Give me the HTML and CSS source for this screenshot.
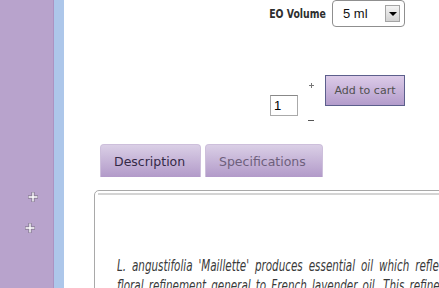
FILE: index.html
```html
<!DOCTYPE html>
<html lang="en">
<head>
    <meta charset="UTF-8">
    <title>Lavender - Maillette</title>
    <link rel="stylesheet" href="styles.css">
</head>
<body>
    <div class="page">
        <aside class="sidebar">
            <span class="plus plus-a">
                <svg width="12" height="12" viewBox="0 0 12 12"><path d="M6 1v10M1 6h10" stroke="#8a7f96" stroke-width="3.4"/><path d="M6 1.6v8.8M1.6 6h8.8" stroke="#fff" stroke-width="1.4"/></svg>
            </span>
            <span class="plus plus-b">
                <svg width="12" height="12" viewBox="0 0 12 12"><path d="M6 1v10M1 6h10" stroke="#8a7f96" stroke-width="3.4"/><path d="M6 1.6v8.8M1.6 6h8.8" stroke="#fff" stroke-width="1.4"/></svg>
            </span>
        </aside>

        <main class="main">
            <div class="options">
                <label class="opt-label">EO Volume</label>
                <div class="select">
                    <span>5 ml</span>
                    <span class="arrow"></span>
                </div>
            </div>

            <div class="buy">
                <input class="qty" type="text" value="1">
                <div class="step">
                    <span class="inc"></span>
                    <span class="dec"></span>
                </div>
                <button class="add">Add to cart</button>
            </div>

            <div class="tabs">
                <div class="tab active">Description</div>
                <div class="tab">Specifications</div>
            </div>

            <div class="panel">
                <hr>
                <p class="desc">L. angustifolia 'Maillette' produces essential oil which reflects the floral refinement general to French lavender oil. This refined oil is sweet and soft, with herbal notes.</p>
            </div>
        </main>
    </div>
</body>
</html>
```

FILE: styles.css
```css
body {
    margin: 0;
    overflow: hidden;
    background: #fff;
    font-family: "Liberation Sans", Arial, sans-serif;
}
.page {
    display: flex;
    min-height: 288px;
}
.sidebar {
    width: 53px;
    flex: none;
    background-color: #b8a3cc;
    border-right: 1px solid #ab93c2;
    box-shadow: 10px 0 0 #adc7ea;
    margin-right: 10px;
    padding-top: 191px;
    display: flex;
    flex-direction: column;
}
.plus {
    display: block;
    width: 12px;
    height: 12px;
}
.plus svg {
    display: block;
}
.plus-a {
    margin-left: 27px;
}
.plus-b {
    margin-left: 24px;
    margin-top: 19px;
}
.main {
    width: 620px;
    flex: none;
    padding-left: 30px;
}
.options {
    width: 311px;
    height: 27px;
    display: flex;
    justify-content: flex-end;
    align-items: center;
}
.opt-label {
    font-family: "DejaVu Sans Condensed", "DejaVu Sans", sans-serif;
    font-weight: bold;
    font-size: 13px;
    color: #2e2e2e;
    display: inline-block;
    transform: scaleX(0.8);
    transform-origin: right center;
    margin-right: 6px;
}
.select {
    width: 73px;
    height: 27px;
    border: 1px solid #8f8f8f;
    border-radius: 4px;
    display: flex;
    align-items: center;
    justify-content: space-between;
    padding: 0 4px 0 10px;
    box-sizing: border-box;
    font-size: 13px;
    color: #111;
}
.arrow {
    width: 15px;
    height: 17px;
    box-sizing: border-box;
    border: 1px solid #a4a4a4;
    background: linear-gradient(#f4f4f4, #d2d2d2);
    position: relative;
}
.arrow::after {
    content: "";
    position: absolute;
    left: 3px;
    top: 6px;
    border-left: 4px solid transparent;
    border-right: 4px solid transparent;
    border-top: 4px solid #000;
}
.buy {
    width: 311px;
    margin-top: 48px;
    height: 48px;
    display: flex;
    justify-content: flex-end;
    align-items: flex-start;
}
.qty {
    width: 28px;
    height: 21px;
    box-sizing: border-box;
    margin-top: 20px;
    border: 1px solid #aaa;
    border-top-color: #888;
    padding: 1px 3px;
    font-family: "Liberation Sans", Arial, sans-serif;
    font-size: 13px;
    color: #000;
}
.step {
    width: 10px;
    margin: 8px 9px 0 8px;
    height: 38px;
    display: flex;
    flex-direction: column;
    justify-content: space-between;
    align-items: center;
}
.inc {
    width: 5px;
    height: 5px;
    background:
        linear-gradient(#777, #777) center / 5px 1px no-repeat,
        linear-gradient(#777, #777) center / 1px 5px no-repeat;
}
.dec {
    width: 6px;
    height: 1px;
    background: #555;
}
.add {
    width: 80px;
    height: 31px;
    border: 1px solid #5c5f8c;
    background: linear-gradient(#dccbe8, #b39ccb);
    color: #505050;
    font-family: "DejaVu Sans", Verdana, sans-serif;
    font-size: 11px;
    padding: 0;
    cursor: pointer;
}
.add:hover {
    background: linear-gradient(#e4d6ee, #bea9d3);
}
.tabs {
    display: flex;
    gap: 4px;
    margin: 21px 0 0 6px;
}
.tab {
    height: 33px;
    line-height: 34px;
    padding: 0 13px;
    border: 1px solid #cdbfdb;
    border-bottom: none;
    border-radius: 4px 4px 0 0;
    background: linear-gradient(#dacfe6, #b29ac9);
    font-family: "DejaVu Sans", Verdana, sans-serif;
    font-size: 12.5px;
    color: #6e5f7c;
    box-sizing: border-box;
}
.tab.active {
    width: 101px;
    color: #342947;
}
.tab + .tab {
    width: 118px;
}
.panel {
    margin-top: 13px;
    border: 1px solid #a9a9a9;
    border-radius: 5px 0 0 0;
    height: 110px;
    padding: 0 0 0 22px;
}
.panel hr {
    margin: 2px 0 0 -19px;
    height: 2px;
    border: none;
    background: #d4d4d4;
}
.desc {
    margin: 61px 0 0;
    width: 500px;
    text-align: justify;
    font-family: "DejaVu Sans Condensed", sans-serif;
    font-style: italic;
    font-size: 16px;
    line-height: 20px;
    color: #3a3a3a;
    transform: scaleX(0.72);
    transform-origin: left top;
}
```
